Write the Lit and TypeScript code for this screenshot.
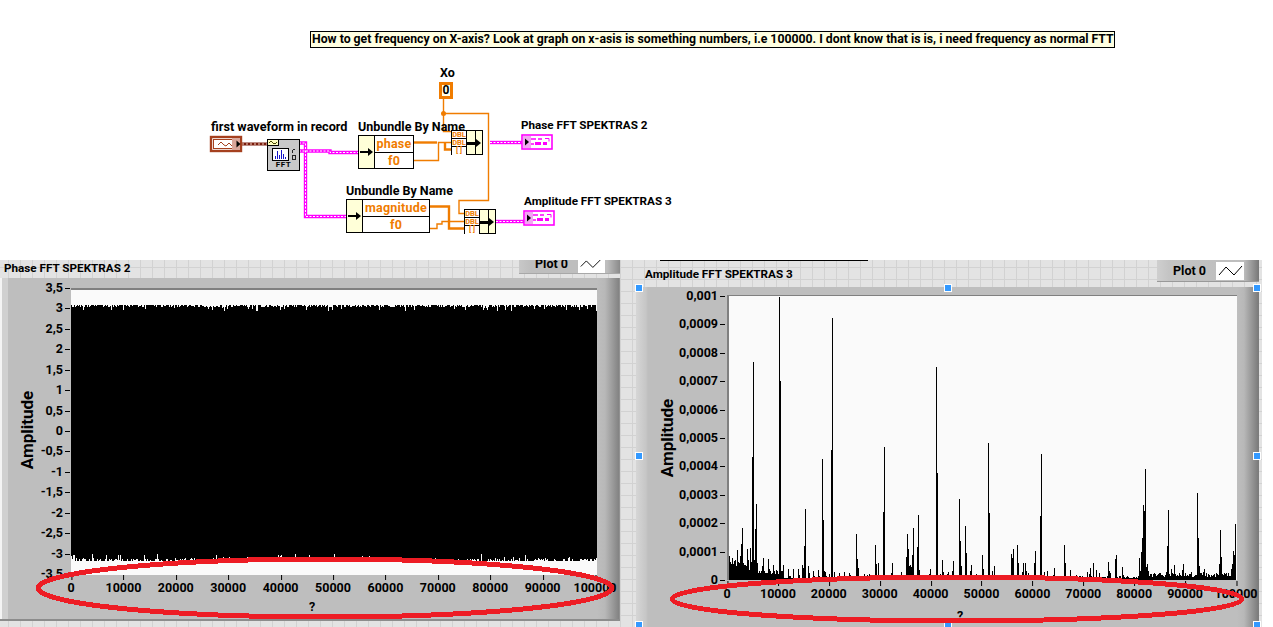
import { LitElement, html, css, svg } from "lit";
import { customElement } from "lit/decorators.js";

// Spike samples read from the amplitude plot: [x px, top y px] in zoomed plot coordinates
const z9: [number, number][] = [
  [22,14],[23,14],[25,14],[28,792],[31,810],[34,815],[37,798],[40,815],[43,807],[46,804],[49,822],[52,774],[55,810],[58,813],[61,792],[64,755],[67,708],[70,814],[73,819],[76,830],[79,830],[82,770],[85,804],[88,837],[91,768],[94,810],[97,495],[100,210],[103,804],[106,710],[109,636],[112,812],[115,843],[118,846],
  [127,822],[130,798],[136,849],[139,849],[145,801],[148,831],[160,819],[172,837],[178,14],[181,267],[184,837],[187,837],[190,819],[205,831],[208,852],[211,852],[220,831],[235,831],[238,849],[247,819],[250,828],[253,762],[256,651],[265,822],[268,843],[280,837],[283,852],[295,834],[298,852],[307,500],[310,684],[313,837],[316,840],[319,852],[328,846],[334,474],[337,78],[343,840],[358,843],[373,840],[388,843],[391,849],[409,726],[412,800],[415,828],[433,846],[442,849],[448,846],[466,759],[469,815],[475,812],[478,849],[490,660],[493,465],[505,849],[514,843],[517,812],[544,840],[559,795],[562,726],[565,770],[568,822],[571,819],[574,825],[577,790],[580,708],[592,765],[595,670],[598,834],[628,846],[631,831],[649,225],[652,543],[661,846],[667,804],[670,840],[682,846],[685,840],[697,837],[700,807],[718,621],[721,747],[724,822],[736,702],[739,782],[751,837],[754,819],[769,846]
];
const z10: [number, number][] = [
  [7,789],[10,831],[25,453],[28,663],[37,837],[43,822],[94,786],[97,798],[100,771],[112,759],[115,813],[127,840],[130,813],[136,813],[139,837],[145,843],[163,813],[166,777],[181,672],[184,486],[193,840],[202,837],[220,849],[223,828],[253,759],[256,813],[262,852],[271,834],[289,849],[322,840],[328,846],[331,828],[340,813],[349,834],[358,843],[385,810],[388,837],[391,843],[406,801],[409,789],[418,852],[427,825],[430,849],[445,855],[454,858],[463,858],[472,858],
  [478,798],[481,837],[484,780],[487,738],[490,639],[493,657],[496,531],[499,825],[502,816],[505,837],[511,858],[514,849],[520,855],[529,855],[538,858],[547,849],[559,840],[562,762],[565,654],[568,846],[574,831],[580,846],[583,819],[592,858],[601,849],[607,834],[610,816],[616,849],[625,855],[634,840],[643,852],[652,603],[655,738],[658,822],[661,849],[670,840],[673,831],[682,858],[688,852],[703,852],[718,816],[721,714],[724,795],[730,855],[736,846],[739,843],[745,843],[754,831],[757,816],[760,777],[763,789],[766,696]
];

function rng(seed: number) {
  let s = seed;
  return () => {
    s = (s * 16807) % 2147483647;
    return s / 2147483647;
  };
}

function spikePath() {
  let d = "";
  for (const [x, y] of z9) d += `M${Math.round(x / 3) + 720.5} ${Math.round(290 + y / 3)}V580`;
  for (const [x, y] of z10) d += `M${Math.round(x / 3) + 980.5} ${Math.round(290 + y / 3)}V580`;
  return d;
}

function cluster() {
  // low continuous floor at the left end and near 85000
  const r = rng(77);
  let d = "";
  for (let x = 1; x < 56; x++) {
    const h = x < 20 ? 13 + r() * 6 : 8 + r() * 4;
    d += `M${x + 0.5} ${286 - Math.round(h)}V286`;
  }
  for (let x = 320; x < 509; x++) {
    d += `M${x + 0.5} ${286 - Math.round(x > 420 ? 5 + r() * 4 : 3 + r() * 3)}V286`;
  }
  return d;
}

function noiseEdges() {
  const r = rng(4242);
  let top = "";
  let bottom = "";
  for (let x = 0; x < 526; x += 1) {
    const t = r();
    const depth = t > 0.93 ? 3 + r() * 3 : t > 0.45 ? 1 + r() : 0.4;
    top += `M${x + 0.5} 14V${15 + depth}`;
    const b = r();
    const dB = b > 0.95 ? 4 + r() * 3 : b > 0.5 ? 1 + r() * 1.6 : 0;
    bottom += `M${x + 0.5} ${271}V${271 - dB}`;
  }
  return { top, bottom };
}

const YL = ["3,5","3","2,5","2","1,5","1","0,5","0","-0,5","-1","-1,5","-2","-2,5","-3","-3,5"];
const YR = ["0,001","0,0009","0,0008","0,0007","0,0006","0,0005","0,0004","0,0003","0,0002","0,0001","0"];
const XS = ["0","10000","20000","30000","40000","50000","60000","70000","80000","90000","100000"];

@customElement("graph-panel")
class GraphPanel extends LitElement {
  static properties = { kind: { type: String } };
  kind = "phase";

  static styles = css`
    :host { display: block; height: 100%; }
    .body {
      height: 100%; box-sizing: border-box; display: grid; background: #bebebe;
      font: 700 12.5px Roboto, sans-serif; color: #000; position: relative;
    }
    .body.phase { grid-template-columns: 71px 526px 1fr; grid-template-rows: 10px 287px 1fr; border-bottom: 2px solid #8c8c8c; background-image: linear-gradient(90deg, #f4f4f4 0 2px, #d0d0d0 2px 8px, #bebebe 8px 597px, #b8b8b8 605px, #828282 619px, #a0a0a0 620px); }
    .body.amp { grid-template-columns: 91px 510px 1fr; grid-template-rows: 8px 285px 1fr; background-image: linear-gradient(90deg, #d6d6d6 0, #c6c6c6 10px, #bebebe 12px 601px, #b8b8b8 608px, #7c7c7c 622px); }
    .plot { grid-column: 2; grid-row: 2; background: #fafafa; border-top: 2px solid #808080; position: relative; overflow: hidden; box-sizing: border-box; }
    .body.amp .plot { border-left: 2px solid #808080; border-top: 1px solid #808080; }
    .plot svg { display: block; position: absolute; left: 0; top: 0; }
    .yaxis { grid-column: 1; grid-row: 1 / 3; position: relative; }
    .xaxis { grid-column: 1 / 4; grid-row: 3; position: relative; }
    .yt { position: absolute; right: 8px; transform: translateY(-50%); line-height: 14px; white-space: nowrap; }
    .body.amp .yt { right: 9px; }
    .yt::after { content: ""; position: absolute; right: -7px; top: 7px; width: 5px; height: 1px; background: #000; }
    .xt { position: absolute; top: 6px; transform: translateX(-50%); line-height: 14px; white-space: nowrap; }
    .body.amp .xt { top: 7px; }
    .xt::before { content: ""; position: absolute; left: 50%; top: -6px; width: 1px; height: 5px; background: #000; }
    .amp-title { position: absolute; font-size: 17px; line-height: 18px; white-space: nowrap; transform: translate(-50%,-50%) rotate(-90deg); }
    .q { position: absolute; transform: translateX(-50%); line-height: 14px; }
  `;

  render() {
    const phase = this.kind === "phase";
    const noise = noiseEdges();
    return html`<div class="body ${phase ? "phase" : "amp"}">
      <div class="yaxis">
        ${(phase ? YL : YR).map((t, i) =>
          html`<div class="yt" style="top:${phase ? 10 + i * 20.43 : 9 + i * 28.4}px">${t}</div>`)}
      </div>
      <div class="plot">
        ${phase
          ? svg`<svg width="526" height="287" shape-rendering="crispEdges"><rect x="0" y="14" width="526" height="257" fill="#000"/><path d=${noise.top} stroke="#fafafa" fill="none"/><path d=${noise.bottom} stroke="#fafafa" fill="none"/></svg>`
          : svg`<svg width="510" height="286" shape-rendering="crispEdges" viewBox="727 294 510 286" style="left:-2px"><rect x="727" y="576" width="509" height="4" fill="#000"/><g transform="translate(727 294)"><path d=${cluster()} stroke="#000" fill="none"/></g><path d=${spikePath()} stroke="#000" fill="none"/></svg>`}
      </div>
      <div class="xaxis">
        ${XS.map((t, i) =>
          html`<div class="xt" style="left:${phase ? 71 + i * 52.4 : 91 + i * 50.9}px">${t}</div>`)}
        <div class="q" style=${phase ? "left:312px;top:25px" : "left:324px;top:29px"}>?</div>
      </div>
      <div class="amp-title" style=${phase ? "left:27px;top:152px" : "left:31px;top:151px"}>Amplitude</div>
    </div>`;
  }
}

@customElement("app-root")
class AppRoot extends LitElement {
  static styles = css`
    :host { display: block; width: 1273px; height: 627px; overflow: hidden; background: #fff; font: 700 12.5px Roboto, sans-serif; color: #000; }
    .diagram { position: relative; height: 260px; }
    .diagram svg.wires { position: absolute; inset: 0; width: 1273px; height: 260px; }
    .note { position: absolute; left: 310px; top: 31px; width: 805px; height: 17px; box-sizing: border-box; border: 1px solid #000; background: #ffffe1; font-size: 12.27px; line-height: 15px; white-space: nowrap; padding-left: 1px; }
    .lab { position: absolute; white-space: nowrap; line-height: 14px; }
    .lab.caps, .ttl { font-size: 11.7px; }
    .lab.wide { font-size: 12.7px; }
    .const { position: absolute; left: 439px; top: 82px; width: 14px; height: 17px; box-sizing: border-box; border: 3px solid #f07c00; background: #ffffe8; text-align: center; line-height: 11px; font-size: 12px; }
    .ub { position: absolute; display: grid; grid-template-rows: 1fr 1fr; box-sizing: border-box; border: 1px solid #000; background: #fff; color: #f07c00; }
    .ub .head { grid-row: 1 / 3; background: #ffffd8; border-right: 1px solid #000; position: relative; }
    .ub .cell { grid-column: 2; text-align: center; line-height: 15px; letter-spacing: 0.2px; }
    .ub .cell + .cell { border-top: 1px solid #000; }
    .arrow { position: absolute; left: 1px; top: 50%; width: 10px; height: 2px; margin-top: -1px; background: #000; }
    .arrow::after { content: ""; position: absolute; right: -3px; top: -3px; border-left: 5px solid #000; border-top: 4px solid transparent; border-bottom: 4px solid transparent; }
    .bd { position: absolute; display: grid; grid-template-columns: 15px 9px 1fr; box-sizing: border-box; border: 1px solid #000; background: #ffffd8; height: 25px; width: 32px; }
    .bd .rows { display: grid; grid-template-rows: repeat(3, 1fr); background: #fff; border-right: 1px solid #000; color: #f07c00; font-size: 7.5px; line-height: 7px; text-align: center; }
    .bd .rows span { border-bottom: 1px solid #000; }
    .bd .rows span:last-child { border-bottom: 0; }
    .bd .mid { border-right: 1px solid #000; }
    .bd .arrow { left: 15px; top: 12px; width: 11px; height: 3px; }
    .fft { position: absolute; left: 267px; top: 139px; width: 33px; height: 32px; box-sizing: border-box; border: 1px solid #000; background: #c9c9c9; }
    .fft .t { position: absolute; left: 0; bottom: 1px; width: 100%; text-align: center; font-size: 8px; line-height: 9px; letter-spacing: 0.6px; }
    .fft svg { position: absolute; left: -1px; top: -1px; }

    .front {
      width: 1262px; height: 367px; position: relative; display: flex;
      background-color: #e3e3e3;
      background-image: linear-gradient(#d2d2d2 1px, transparent 1px), linear-gradient(90deg, #d2d2d2 1px, transparent 1px);
      background-size: 12px 12px; background-position: 8px 7px;
    }
    .col { display: flex; flex-direction: column; min-width: 0; }
    .col.l { width: 636px; padding-bottom: 6px; padding-right: 16px; box-sizing: border-box; }
    .col.r { flex: 1; padding-right: 3px; }
    .head { display: flex; justify-content: space-between; }
    .col.l .head { height: 18px; padding-left: 4px; }
    .col.r .head { height: 27px; padding-left: 9px; }
    .ttl { line-height: 14px; white-space: nowrap; }
    .col.l .ttl { margin-top: 1px; }
    .col.r .ttl { margin-top: 7px; }
    .legend { display: grid; align-items: center; box-sizing: border-box; }
    .col.l .legend { width: 101px; height: 14px; grid-template-columns: 12px 47px 29px 1fr; background: linear-gradient(90deg, #c8c8c8, #bebebe 12px, #bebebe 88px, #8a8a8a); border-bottom: 1px solid #a8a8a8; overflow: hidden; }
    .col.r .legend { width: 102px; height: 22px; grid-template-columns: 12px 47px 28px 1fr; background: linear-gradient(90deg, #cfcfcf, #c4c4c4 12px, #bdbdbd 87px, #777 ); border-bottom: 1px solid #999; }
    .legend .nm { grid-column: 2; text-align: center; line-height: 14px; padding-right: 6px; white-space: nowrap; }
    .col.l .legend .nm { margin-top: -5px; }
    .legend .sw { grid-column: 3; background: #fff; height: 100%; display: block; }
    .col.r .legend .sw { height: 18px; }
    .bodywrap { flex: 1; min-height: 0; }

    .bar { position: absolute; left: 660px; top: 0; width: 208px; height: 1px; background: #000; }
    .hd { position: absolute; width: 8px; height: 8px; background: #3399ff; border: 1px solid #fff; box-sizing: border-box; margin: -4px 0 0 -4px; }
    svg.rings { position: absolute; left: 0; top: 0; pointer-events: none; }
  `;

  render() {
    const handles = [[639, 28], [948, 28], [1257, 28], [639, 196], [1257, 196], [639, 365], [948, 365], [1257, 365]];
    return html`
      <div class="diagram">
        <div class="note">How to get frequency on X-axis? Look at graph on x-asis is something numbers, i.e 100000. I dont know that is is, i need frequency as normal FTT</div>

        <svg class="wires" viewBox="0 0 1273 260" fill="none">
          <g stroke="#f07c00" stroke-width="1.4">
            <path d="M443.5 99V131.5H452"/>
            <path d="M443.5 113.5H488.5V200.5H459V213.5H465"/>
            <path d="M413 160.5H438.5V142.5H452"/>
            <path d="M430 228.5H437V224H442V221.5H465"/>
          </g>
          <circle cx="443.5" cy="113.5" r="2.5" fill="#f07c00"/>
          <g stroke="#f07c00" stroke-width="2.4">
            <path d="M413 142.5H437"/>
            <path d="M445 143V149.5H452"/>
            <path d="M430 206.5H449V228.5H465"/>
          </g>
          <path d="M242 144H268" stroke="#7a1c0c" stroke-width="3"/>
          <path d="M242 144H268" stroke="#f4d8c8" stroke-width="1" stroke-dasharray="2 2"/>
          <g stroke="#ff00ff" stroke-width="3.4">
            <path d="M299 143H305.5V216.5H347"/>
            <path d="M299 151H330V152.5H359"/>
            <path d="M490 142.5H522"/>
            <path d="M496 221.5H524"/>
          </g>
          <g stroke="#fff" stroke-width="1" stroke-dasharray="2 1.5">
            <path d="M299 143H305.5V216.5H347"/>
            <path d="M299 151H330V152.5H359"/>
            <path d="M490 142.5H522"/>
            <path d="M496 221.5H524"/>
          </g>

          <!-- waveform control -->
          <rect x="211" y="137" width="30" height="14" fill="#fff" stroke="#a5401f" stroke-width="2.4"/>
          <rect x="213.5" y="139.5" width="25" height="9" stroke="#a5401f"/>
          <rect x="232" y="138" width="8" height="12" fill="#d9a69a"/>
          <path d="M218 145l3-3 3 3 2 1 3-3 3 3" stroke="#a5401f"/>
          <path d="M236.5 140.5l4 3.5-4 3.5z" fill="#000"/>

          <!-- indicator terminals -->
          ${[[521, 134], [523, 210]].map(([x, y]) => svg`
            <rect x=${x + 1} y=${y + 1} width="30" height="14" fill="#fff" stroke="#ff00ff" stroke-width="1.6"/>
            <rect x=${x + 2} y=${y + 2} width="8" height="12" fill="#f2a6f2"/>
            <path d="M${x + 4} ${y + 4.5}l4 3.5-4 3.5z" fill="#000"/>
            <path d="M${x + 10} ${y + 5}h5M${x + 17} ${y + 5}h4M${x + 10} ${y + 10}h3" stroke="#ff00ff" stroke-width="1.4"/>
            <path d="M${x + 14} ${y + 9.5}h6M${x + 22} ${y + 9.5}h4" stroke="#ff00ff" stroke-width="3"/>
            <path d="M${x + 24} ${y + 4.5}h4v3" stroke="#ff00ff"/>
          `)}
        </svg>

        <div class="lab" style="left:440px;top:66px">Xo</div>
        <div class="const">0</div>
        <div class="lab wide" style="left:211px;top:120px">first waveform in record</div>
        <div class="lab" style="left:358px;top:120px">Unbundle By Name</div>
        <div class="lab" style="left:346px;top:184px">Unbundle By Name</div>
        <div class="lab caps" style="left:521px;top:118px">Phase FFT SPEKTRAS 2</div>
        <div class="lab caps" style="left:524px;top:194px">Amplitude FFT SPEKTRAS 3</div>

        <div class="fft">
          <svg width="33" height="32" fill="none" shape-rendering="crispEdges">
            <rect x="0.5" y="0.5" width="11" height="6" fill="#ffffc0" stroke="#000"/>
            <path d="M2 4l2-2 2 2 2 1 2-2" stroke="#4a4a00"/>
            <rect x="5.5" y="9.5" width="16" height="12" fill="#fff" stroke="#000"/>
            <path d="M8 20V17M10 20V12M12 20V16M14 20V11M16 20V15M18 20V18" stroke="#1414c8"/>
            <path d="M25.5 10h2M25 11v3M25 16h3v4h-3z" stroke="#222"/>
          </svg>
          <div class="t">FFT</div>
        </div>

        <div class="ub" style="left:358px;top:135px;width:56px;height:34px;grid-template-columns:16px 1fr">
          <div class="head"><div class="arrow"></div></div>
          <div class="cell">phase</div><div class="cell">f0</div>
        </div>
        <div class="ub" style="left:346px;top:199px;width:84px;height:34px;grid-template-columns:16px 1fr">
          <div class="head"><div class="arrow"></div></div>
          <div class="cell">magnitude</div><div class="cell">f0</div>
        </div>

        ${[[451, 130], [464, 209]].map(([x, y]) => html`
          <div class="bd" style="left:${x}px;top:${y}px">
            <div class="rows"><span>DBL</span><span>DBL</span><span>[ ]</span></div>
            <div class="mid"></div>
            <div></div>
            <div class="arrow"></div>
          </div>`)}
      </div>

      <div class="front">
        <div class="col l">
          <div class="head">
            <div class="ttl">Phase FFT SPEKTRAS 2</div>
            <div class="legend"><div class="nm">Plot 0</div><svg class="sw" viewBox="0 2 29 14" fill="none"><path d="M3 9l6-6 7 7 8-8" stroke="#000"/></svg></div>
          </div>
          <div class="bodywrap"><graph-panel kind="phase"></graph-panel></div>
        </div>
        <div class="col r">
          <div class="head">
            <div class="ttl">Amplitude FFT SPEKTRAS 3</div>
            <div class="legend"><div class="nm">Plot 0</div><svg class="sw" viewBox="0 0 28 18" fill="none"><path d="M3 13l7-8 8 8 8-9" stroke="#000"/></svg></div>
          </div>
          <div class="bodywrap"><graph-panel kind="amp"></graph-panel></div>
        </div>
        <div class="bar"></div>
        ${handles.map(([x, y]) => html`<div class="hd" style="left:${x}px;top:${y}px"></div>`)}
        <svg class="rings" width="1273" height="367" viewBox="0 260 1273 367" fill="none" stroke="#ed1c24" stroke-width="5" shape-rendering="crispEdges">
          <ellipse cx="325" cy="588" rx="287" ry="29"/>
          <ellipse cx="957" cy="599" rx="285" ry="22"/>
        </svg>
      </div>
    `;
  }
}
void GraphPanel; void AppRoot;
